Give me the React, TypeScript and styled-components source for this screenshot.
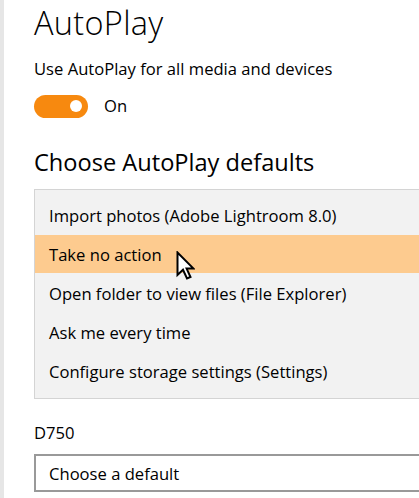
import React from "react";
import styled, { createGlobalStyle } from "styled-components";

const GlobalStyle = createGlobalStyle`
  html, body {
    margin: 0;
    padding: 0;
    background: #ffffff;
  }
  body {
    font-family: "Open Sans", "Noto Sans", sans-serif;
    color: #000000;
    overflow: hidden;
  }
`;

const options = [
  "Import photos (Adobe Lightroom 8.0)",
  "Take no action",
  "Open folder to view files (File Explorer)",
  "Ask me every time",
  "Configure storage settings (Settings)",
];

const App = () => {
  return (
    <>
      <GlobalStyle />
      <Page>
        <Title>AutoPlay</Title>
        <Label>Use AutoPlay for all media and devices</Label>
        <ToggleRow>
          <Toggle $on>
            <Knob />
          </Toggle>
          <ToggleText>On</ToggleText>
        </ToggleRow>
        <Heading>Choose AutoPlay defaults</Heading>
        <List>
          {options.map((o, i) => (
            <Item key={o} $active={i === 1}>
              {o}
              {i === 1 && <Cursor />}
            </Item>
          ))}
        </List>
        <DeviceLabel>D750</DeviceLabel>
        <Select>Choose a default</Select>
      </Page>
    </>
  );
};

const Cursor = () => (
  <CursorIcon width="19" height="30" viewBox="0 0 19 30">
    <path
      d="M1.5 1.5 L1.5 24 L7 18.8 L11 27.5 L14.5 26 L10.6 17.6 L17.5 17.6 Z"
      fill="#ffffff"
      stroke="#000000"
      strokeWidth="2"
      strokeLinejoin="miter"
    />
  </CursorIcon>
);

export default App;

const Page = styled.div`
  min-height: 100vh;
  border-left: 4px solid #e6e6e6;
  padding-left: 30px;
  box-sizing: border-box;
  width: 419px;
  overflow: hidden;
`;

const Title = styled.h1`
  margin: 0;
  font-size: 32.5px;
  font-weight: 300;
  letter-spacing: 0.3px;
  line-height: 45px;
`;

const Label = styled.div`
  margin-top: 14px;
  font-size: 16.6px;
  line-height: 20px;
`;

const ToggleRow = styled.div`
  margin-top: 15px;
  display: flex;
  align-items: center;
  gap: 16px;
  height: 24px;
`;

const Toggle = styled.div<{ $on?: boolean }>`
  width: 54px;
  height: 23px;
  border-radius: 12px;
  background: ${(p) => (p.$on ? "#f7890f" : "#ffffff")};
  display: flex;
  align-items: center;
  justify-content: ${(p) => (p.$on ? "flex-end" : "flex-start")};
  padding: 0 6px;
  box-sizing: border-box;
`;

const Knob = styled.div`
  width: 12px;
  height: 12px;
  border-radius: 50%;
  background: #ffffff;
`;

const ToggleText = styled.span`
  font-size: 16.6px;
  line-height: 20px;
`;

const Heading = styled.h2`
  margin: 30px 0 0;
  font-size: 23.6px;
  font-weight: 400;
  line-height: 28px;
`;

const List = styled.div`
  margin-top: 13px;
  width: 420px;
  background: #f2f2f2;
  border-top: 1px solid #d4d4d4;
  border-left: 1px solid #d4d4d4;
  border-bottom: 1px solid #d4d4d4;
  padding: 5px 0 7px;
`;

const Item = styled.div<{ $active?: boolean }>`
  position: relative;
  height: 38px;
  margin: 1px 0;
  padding-left: 14px;
  display: flex;
  align-items: center;
  font-size: 16.6px;
  background: ${(p) => (p.$active ? "#fdcb8f" : "transparent")};
`;

const CursorIcon = styled.svg`
  position: absolute;
  left: 141px;
  top: 16px;
`;

const DeviceLabel = styled.div`
  margin-top: 24px;
  font-size: 16.6px;
  line-height: 20px;
`;

const Select = styled.div`
  margin-top: 11px;
  width: 420px;
  height: 38px;
  border: 2px solid #999999;
  box-sizing: border-box;
  padding-left: 13px;
  display: flex;
  align-items: center;
  font-size: 16.6px;
`;
